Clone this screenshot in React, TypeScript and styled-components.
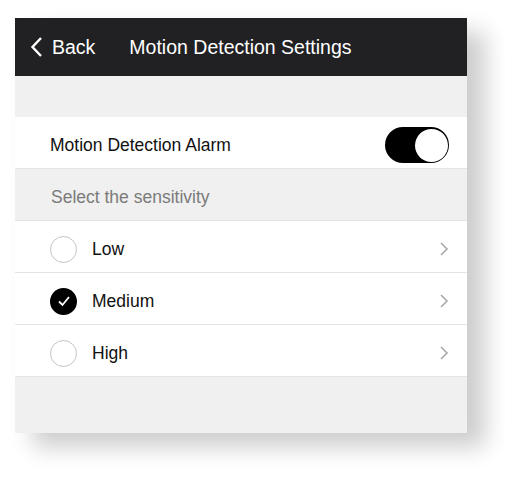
import styled, { createGlobalStyle } from 'styled-components';

const GlobalStyle = createGlobalStyle`
  html, body {
    margin: 0;
    padding: 0;
    background: #ffffff;
    font-family: 'Liberation Sans', Arial, sans-serif;
  }
`;

const Page = styled.div`
  padding: 18px 0 0 15px;
  width: 505px;
  height: 484px;
  box-sizing: border-box;
  overflow: hidden;
`;

const Card = styled.div`
  width: 452px;
  display: flex;
  flex-direction: column;
  background: #eff0ef;
  box-shadow: 18px 14px 22px rgba(0, 0, 0, 0.2);
`;

const Header = styled.div`
  height: 58px;
  background: #212123;
  color: #ffffff;
  display: flex;
  align-items: center;
  padding: 0 0 0 14px;
  font-size: 19.5px;
`;

const BackButton = styled.button`
  display: flex;
  align-items: center;
  gap: 8px;
  background: none;
  border: none;
  padding: 0;
  color: #ffffff;
  font: inherit;
  cursor: pointer;
`;

const Title = styled.div`
  margin-left: 34px;
`;

const Spacer = styled.div<{ $h: number }>`
  height: ${({ $h }) => $h}px;
  background: #eff0ef;
`;

const Row = styled.div`
  height: 52px;
  box-sizing: border-box;
  background: #ffffff;
  display: flex;
  align-items: center;
  padding: 5px 18px 0 35px;
  border-bottom: 1px solid #e3e4e3;
  font-size: 17.5px;
  color: #111111;
`;

const Label = styled.div`
  flex: 1;
`;

const SectionTitle = styled.div`
  height: 52px;
  box-sizing: border-box;
  display: flex;
  align-items: center;
  padding: 5px 0 0 36px;
  border-bottom: 1px solid #e3e4e3;
  font-size: 17.5px;
  color: #7b7b7b;
`;

const Toggle = styled.div<{ $on: boolean }>`
  width: 64px;
  height: 36px;
  border-radius: 18px;
  background: ${({ $on }) => ($on ? '#000000' : '#e5e5e5')};
  display: flex;
  align-items: center;
  justify-content: ${({ $on }) => ($on ? 'flex-end' : 'flex-start')};
  padding: 1.5px;
  box-sizing: border-box;
`;

const Knob = styled.div`
  width: 33px;
  height: 33px;
  border-radius: 50%;
  background: #ffffff;
`;

const Radio = styled.div<{ $checked: boolean }>`
  width: 27px;
  height: 27px;
  border-radius: 50%;
  box-sizing: border-box;
  border: ${({ $checked }) => ($checked ? 'none' : '1px solid #c4c4c4')};
  background: ${({ $checked }) => ($checked ? '#000000' : '#ffffff')};
  display: flex;
  align-items: center;
  justify-content: center;
  margin-right: 15px;
`;

const ChevronBox = styled.div`
  display: flex;
`;

const Chevron = () => (
  <ChevronBox>
    <svg width="10" height="16" viewBox="0 0 10 16">
      <path d="M2 2 L8 8 L2 14" fill="none" stroke="#a9a9a9" strokeWidth="1.6" />
    </svg>
  </ChevronBox>
);

const levels = ['Low', 'Medium', 'High'];

export default function App() {
  const selected = 'Medium';
  return (
    <Page>
      <GlobalStyle />
      <Card>
        <Header>
          <BackButton>
            <svg width="15" height="22" viewBox="0 0 15 22">
              <path d="M12 2 L3.5 11 L12 20" fill="none" stroke="#ffffff" strokeWidth="2.4" />
            </svg>
            Back
          </BackButton>
          <Title>Motion Detection Settings</Title>
        </Header>
        <Spacer $h={41} />
        <Row>
          <Label>Motion Detection Alarm</Label>
          <Toggle $on>
            <Knob />
          </Toggle>
        </Row>
        <SectionTitle>Select the sensitivity</SectionTitle>
        {levels.map((level) => (
          <Row key={level}>
            <Radio $checked={level === selected}>
              {level === selected && (
                <svg width="14" height="12" viewBox="0 0 14 12">
                  <path d="M2 6.5 L5.5 10 L12 2" fill="none" stroke="#ffffff" strokeWidth="1.8" />
                </svg>
              )}
            </Radio>
            <Label>{level}</Label>
            <Chevron />
          </Row>
        ))}
        <Spacer $h={56} />
      </Card>
    </Page>
  );
}
